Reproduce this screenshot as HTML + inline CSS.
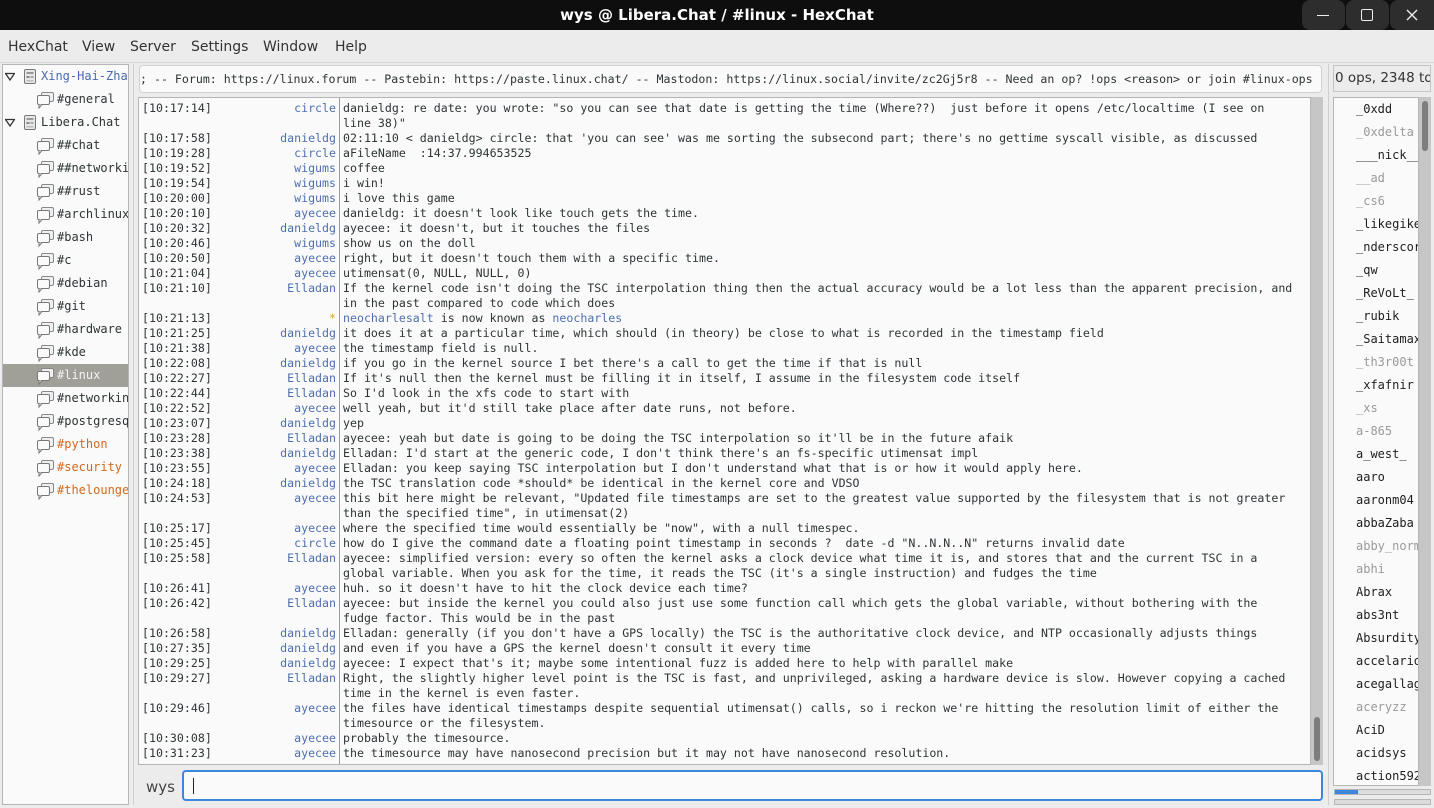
<!DOCTYPE html>
<html><head><meta charset="utf-8"><style>
*{margin:0;padding:0;box-sizing:border-box}
body{width:1434px;height:808px;background:#ececec;position:relative;overflow:hidden;font-family:"DejaVu Sans Mono","Liberation Mono",monospace;font-size:11.6px;color:#2e3436}
.abs{position:absolute}
#title{left:0;top:0;width:1434px;height:30px;background:#0e0e0e;color:#fff;font:bold 15px "DejaVu Sans","Liberation Sans",sans-serif;text-align:center;line-height:30px}
.wb{top:0;width:43px;height:30px;background:#2d2d2d;border-radius:8px}
#menu{left:0;top:31px;height:32px;font:14px "DejaVu Sans","Liberation Sans",sans-serif;color:#333;line-height:32px;white-space:nowrap}
#menu span{position:absolute}
#tree{left:2px;top:64px;width:127px;height:741px;background:#fafafa;border:1px solid #b6b6b6;overflow:hidden;font-size:12px}
.ti{position:absolute;height:23px;line-height:23px;white-space:nowrap;left:0;width:125px}
.ti svg{position:absolute;top:4px}
#topic{left:139px;top:65px;width:1183px;height:28px;background:#fafafa;border:1px solid #d0d0d0;border-radius:4px;white-space:nowrap;overflow:hidden;line-height:26px;padding-left:0}
#chat{left:138px;top:97px;width:1173px;height:668px;background:#fafafa;border:1px solid #b6b6b6;overflow:hidden}
#sep{left:200px;top:0;width:1px;height:668px;background:#9a9a9a}
.r{position:absolute;left:0;height:15px;line-height:15px;white-space:pre;width:1170px}
.r .t{position:absolute;left:3px}
.r .n{position:absolute;right:973px;color:#4f6fb0;text-align:right}
.r .m{position:absolute;left:204px}
#sb{left:1311px;top:97px;width:12px;height:668px;background:#c6c6c6}
#ul{left:1333px;top:97px;width:86px;height:689px;background:#fafafa;border:1px solid #b6b6b6;overflow:hidden;font-size:12px}
.u{position:absolute;left:22px;height:23px;line-height:23px;white-space:nowrap;color:#1e1e1e}
.g{color:#9a9a9a}
</style></head><body>
<div id="title" class="abs">wys @ Libera.Chat / #linux - HexChat</div>
<div class="abs wb" style="left:1302px"><div class="abs" style="left:15px;top:15px;width:12px;height:1px;background:#eee"></div></div>
<div class="abs wb" style="left:1346px"><div class="abs" style="left:15px;top:9px;width:12px;height:12px;border:1.3px solid #eee;border-radius:2px"></div></div>
<div class="abs wb" style="left:1390px;width:44px;border-radius:8px 0 0 8px"><svg class="abs" style="left:16px;top:9px" width="12" height="12"><path d="M1 1L11 11M11 1L1 11" stroke="#eee" stroke-width="1.4"/></svg></div>
<div id="menu" class="abs"><span style="left:8px">HexChat</span><span style="left:82px">View</span><span style="left:130px">Server</span><span style="left:191px">Settings</span><span style="left:263px">Window</span><span style="left:335px">Help</span></div>
<div class="abs" style="left:0;top:62px;width:1434px;height:1px;background:#d6d6d6"></div>

<div id="tree" class="abs">
<svg width="0" height="0" style="position:absolute"><defs>
<g id="srv"><rect x="1.5" y="0.5" width="11" height="14" rx="1.5" fill="#e8e8e8" stroke="#777"/><rect x="3.5" y="3" width="7" height="2" fill="#999"/><rect x="3.5" y="7" width="3" height="2" fill="#888"/><rect x="7.5" y="7" width="3" height="2" fill="#aaa"/><rect x="3.5" y="11" width="7" height="1.5" fill="#bbb"/></g>
<g id="ch"><rect x="4.5" y="0.5" width="12" height="9" rx="1.5" fill="#f0f0f0" stroke="#888"/><rect x="0.5" y="3.5" width="12" height="9" rx="1.5" fill="#fafafa" stroke="#777"/><path d="M2 12.5L2 16L5 12.5" fill="#fafafa" stroke="#777"/></g>
</defs></svg>
<div class="ti" style="top:0"><svg width="10" height="10" style="left:2px;top:7px"><path d="M0.5 1.5H9.5L5 8Z" fill="none" stroke="#333" stroke-width="1.3"/></svg><svg width="15" height="16" style="left:20px"><use href="#srv"/></svg><span style="position:absolute;left:38px;color:#4a68b0">Xing-Hai-Zhang</span></div>
<div class="ti" style="top:23px"><svg width="18" height="17" style="left:34px"><use href="#ch"/></svg><span style="position:absolute;left:54px">#general</span></div>
<div class="ti" style="top:46px"><svg width="10" height="10" style="left:2px;top:7px"><path d="M0.5 1.5H9.5L5 8Z" fill="none" stroke="#333" stroke-width="1.3"/></svg><svg width="15" height="16" style="left:20px"><use href="#srv"/></svg><span style="position:absolute;left:38px">Libera.Chat</span></div>
<div class="ti" style="top:69px"><svg width="18" height="17" style="left:34px"><use href="#ch"/></svg><span style="position:absolute;left:54px">##chat</span></div>
<div class="ti" style="top:92px"><svg width="18" height="17" style="left:34px"><use href="#ch"/></svg><span style="position:absolute;left:54px">##networking</span></div>
<div class="ti" style="top:115px"><svg width="18" height="17" style="left:34px"><use href="#ch"/></svg><span style="position:absolute;left:54px">##rust</span></div>
<div class="ti" style="top:138px"><svg width="18" height="17" style="left:34px"><use href="#ch"/></svg><span style="position:absolute;left:54px">#archlinux</span></div>
<div class="ti" style="top:161px"><svg width="18" height="17" style="left:34px"><use href="#ch"/></svg><span style="position:absolute;left:54px">#bash</span></div>
<div class="ti" style="top:184px"><svg width="18" height="17" style="left:34px"><use href="#ch"/></svg><span style="position:absolute;left:54px">#c</span></div>
<div class="ti" style="top:207px"><svg width="18" height="17" style="left:34px"><use href="#ch"/></svg><span style="position:absolute;left:54px">#debian</span></div>
<div class="ti" style="top:230px"><svg width="18" height="17" style="left:34px"><use href="#ch"/></svg><span style="position:absolute;left:54px">#git</span></div>
<div class="ti" style="top:253px"><svg width="18" height="17" style="left:34px"><use href="#ch"/></svg><span style="position:absolute;left:54px">#hardware</span></div>
<div class="ti" style="top:276px"><svg width="18" height="17" style="left:34px"><use href="#ch"/></svg><span style="position:absolute;left:54px">#kde</span></div>
<div class="ti" style="top:299px;background:#a09f98"><svg width="18" height="17" style="left:34px"><use href="#ch"/></svg><span style="position:absolute;left:54px;color:#f4f4f4">#linux</span></div>
<div class="ti" style="top:322px"><svg width="18" height="17" style="left:34px"><use href="#ch"/></svg><span style="position:absolute;left:54px">#networking</span></div>
<div class="ti" style="top:345px"><svg width="18" height="17" style="left:34px"><use href="#ch"/></svg><span style="position:absolute;left:54px">#postgresql</span></div>
<div class="ti" style="top:368px"><svg width="18" height="17" style="left:34px"><use href="#ch"/></svg><span style="position:absolute;left:54px;color:#d2691e">#python</span></div>
<div class="ti" style="top:391px"><svg width="18" height="17" style="left:34px"><use href="#ch"/></svg><span style="position:absolute;left:54px;color:#d2691e">#security</span></div>
<div class="ti" style="top:414px"><svg width="18" height="17" style="left:34px"><use href="#ch"/></svg><span style="position:absolute;left:54px;color:#d2691e">#thelounge</span></div>
</div>
<div class="abs" style="left:133px;top:64px;width:1px;height:741px;background:#cfcfcf"></div>
<div class="abs" style="left:1328px;top:64px;width:1px;height:741px;background:#cfcfcf"></div>

<div id="topic" class="abs"><span style="position:absolute;left:0px">; -- Forum: https://linux.forum -- Pastebin: https://paste.linux.chat/ -- Mastodon: https://linux.social/invite/zc2Gj5r8 -- Need an op? !ops &lt;reason&gt; or join #linux-ops</span></div>

<div id="chat" class="abs">
<div id="sep" class="abs"></div>
<div class="r" style="top:3px"><span class="t">[10:17:14]</span><span class="n">circle</span><span class="m">danieldg: re date: you wrote: "so you can see that date is getting the time (Where??)  just before it opens /etc/localtime (I see on</span></div>
<div class="r" style="top:18px"><span class="m">line 38)"</span></div>
<div class="r" style="top:33px"><span class="t">[10:17:58]</span><span class="n">danieldg</span><span class="m">02:11:10 &lt; danieldg&gt; circle: that 'you can see' was me sorting the subsecond part; there's no gettime syscall visible, as discussed</span></div>
<div class="r" style="top:48px"><span class="t">[10:19:28]</span><span class="n">circle</span><span class="m">aFileName  :14:37.994653525</span></div>
<div class="r" style="top:63px"><span class="t">[10:19:52]</span><span class="n">wigums</span><span class="m">coffee</span></div>
<div class="r" style="top:78px"><span class="t">[10:19:54]</span><span class="n">wigums</span><span class="m">i win!</span></div>
<div class="r" style="top:93px"><span class="t">[10:20:00]</span><span class="n">wigums</span><span class="m">i love this game</span></div>
<div class="r" style="top:108px"><span class="t">[10:20:10]</span><span class="n">ayecee</span><span class="m">danieldg: it doesn't look like touch gets the time.</span></div>
<div class="r" style="top:123px"><span class="t">[10:20:32]</span><span class="n">danieldg</span><span class="m">ayecee: it doesn't, but it touches the files</span></div>
<div class="r" style="top:138px"><span class="t">[10:20:46]</span><span class="n">wigums</span><span class="m">show us on the doll</span></div>
<div class="r" style="top:153px"><span class="t">[10:20:50]</span><span class="n">ayecee</span><span class="m">right, but it doesn't touch them with a specific time.</span></div>
<div class="r" style="top:168px"><span class="t">[10:21:04]</span><span class="n">ayecee</span><span class="m">utimensat(0, NULL, NULL, 0)</span></div>
<div class="r" style="top:183px"><span class="t">[10:21:10]</span><span class="n">Elladan</span><span class="m">If the kernel code isn't doing the TSC interpolation thing then the actual accuracy would be a lot less than the apparent precision, and</span></div>
<div class="r" style="top:198px"><span class="m">in the past compared to code which does</span></div>
<div class="r" style="top:213px"><span class="t">[10:21:13]</span><span class="n" style="color:#e0a040">*</span><span class="m"><span style="color:#4f6fb0">neocharlesalt</span> is now known as <span style="color:#4f6fb0">neocharles</span></span></div>
<div class="r" style="top:228px"><span class="t">[10:21:25]</span><span class="n">danieldg</span><span class="m">it does it at a particular time, which should (in theory) be close to what is recorded in the timestamp field</span></div>
<div class="r" style="top:243px"><span class="t">[10:21:38]</span><span class="n">ayecee</span><span class="m">the timestamp field is null.</span></div>
<div class="r" style="top:258px"><span class="t">[10:22:08]</span><span class="n">danieldg</span><span class="m">if you go in the kernel source I bet there's a call to get the time if that is null</span></div>
<div class="r" style="top:273px"><span class="t">[10:22:27]</span><span class="n">Elladan</span><span class="m">If it's null then the kernel must be filling it in itself, I assume in the filesystem code itself</span></div>
<div class="r" style="top:288px"><span class="t">[10:22:44]</span><span class="n">Elladan</span><span class="m">So I'd look in the xfs code to start with</span></div>
<div class="r" style="top:303px"><span class="t">[10:22:52]</span><span class="n">ayecee</span><span class="m">well yeah, but it'd still take place after date runs, not before.</span></div>
<div class="r" style="top:318px"><span class="t">[10:23:07]</span><span class="n">danieldg</span><span class="m">yep</span></div>
<div class="r" style="top:333px"><span class="t">[10:23:28]</span><span class="n">Elladan</span><span class="m">ayecee: yeah but date is going to be doing the TSC interpolation so it'll be in the future afaik</span></div>
<div class="r" style="top:348px"><span class="t">[10:23:38]</span><span class="n">danieldg</span><span class="m">Elladan: I'd start at the generic code, I don't think there's an fs-specific utimensat impl</span></div>
<div class="r" style="top:363px"><span class="t">[10:23:55]</span><span class="n">ayecee</span><span class="m">Elladan: you keep saying TSC interpolation but I don't understand what that is or how it would apply here.</span></div>
<div class="r" style="top:378px"><span class="t">[10:24:18]</span><span class="n">danieldg</span><span class="m">the TSC translation code *should* be identical in the kernel core and VDSO</span></div>
<div class="r" style="top:393px"><span class="t">[10:24:53]</span><span class="n">ayecee</span><span class="m">this bit here might be relevant, "Updated file timestamps are set to the greatest value supported by the filesystem that is not greater</span></div>
<div class="r" style="top:408px"><span class="m">than the specified time", in utimensat(2)</span></div>
<div class="r" style="top:423px"><span class="t">[10:25:17]</span><span class="n">ayecee</span><span class="m">where the specified time would essentially be "now", with a null timespec.</span></div>
<div class="r" style="top:438px"><span class="t">[10:25:45]</span><span class="n">circle</span><span class="m">how do I give the command date a floating point timestamp in seconds ?  date -d "N..N.N..N" returns invalid date</span></div>
<div class="r" style="top:453px"><span class="t">[10:25:58]</span><span class="n">Elladan</span><span class="m">ayecee: simplified version: every so often the kernel asks a clock device what time it is, and stores that and the current TSC in a</span></div>
<div class="r" style="top:468px"><span class="m">global variable. When you ask for the time, it reads the TSC (it's a single instruction) and fudges the time</span></div>
<div class="r" style="top:483px"><span class="t">[10:26:41]</span><span class="n">ayecee</span><span class="m">huh. so it doesn't have to hit the clock device each time?</span></div>
<div class="r" style="top:498px"><span class="t">[10:26:42]</span><span class="n">Elladan</span><span class="m">ayecee: but inside the kernel you could also just use some function call which gets the global variable, without bothering with the</span></div>
<div class="r" style="top:513px"><span class="m">fudge factor. This would be in the past</span></div>
<div class="r" style="top:528px"><span class="t">[10:26:58]</span><span class="n">danieldg</span><span class="m">Elladan: generally (if you don't have a GPS locally) the TSC is the authoritative clock device, and NTP occasionally adjusts things</span></div>
<div class="r" style="top:543px"><span class="t">[10:27:35]</span><span class="n">danieldg</span><span class="m">and even if you have a GPS the kernel doesn't consult it every time</span></div>
<div class="r" style="top:558px"><span class="t">[10:29:25]</span><span class="n">danieldg</span><span class="m">ayecee: I expect that's it; maybe some intentional fuzz is added here to help with parallel make</span></div>
<div class="r" style="top:573px"><span class="t">[10:29:27]</span><span class="n">Elladan</span><span class="m">Right, the slightly higher level point is the TSC is fast, and unprivileged, asking a hardware device is slow. However copying a cached</span></div>
<div class="r" style="top:588px"><span class="m">time in the kernel is even faster.</span></div>
<div class="r" style="top:603px"><span class="t">[10:29:46]</span><span class="n">ayecee</span><span class="m">the files have identical timestamps despite sequential utimensat() calls, so i reckon we're hitting the resolution limit of either the</span></div>
<div class="r" style="top:618px"><span class="m">timesource or the filesystem.</span></div>
<div class="r" style="top:633px"><span class="t">[10:30:08]</span><span class="n">ayecee</span><span class="m">probably the timesource.</span></div>
<div class="r" style="top:648px"><span class="t">[10:31:23]</span><span class="n">ayecee</span><span class="m">the timesource may have nanosecond precision but it may not have nanosecond resolution.</span></div>
</div>
<div id="sb" class="abs"><div class="abs" style="left:3px;top:620px;width:6px;height:44px;background:#7d7d7d;border-radius:3px"></div></div>

<div class="abs" style="left:146px;top:778px;font:15px 'DejaVu Sans','Liberation Sans',sans-serif;color:#444">wys</div>
<div class="abs" style="left:182px;top:770px;width:1141px;height:31px;border:2px solid #3d86dc;border-radius:4px;background:#fafafa"><div class="abs" style="left:9px;top:6px;width:1px;height:16px;background:#222"></div></div>

<div class="abs" style="left:1333px;top:65px;width:98px;height:27px;border:1px solid #c4c4c4;background:#ececec;font:13.5px 'DejaVu Sans','Liberation Sans',sans-serif;line-height:25px;white-space:nowrap;overflow:hidden;padding-left:1px;color:#333">0 ops, 2348 total</div>
<div id="ul" class="abs">
<div class="u" style="top:0">_0xdd</div>
<div class="u g" style="top:23px">_0xdelta</div>
<div class="u" style="top:46px">___nick__</div>
<div class="u g" style="top:69px">__ad</div>
<div class="u g" style="top:92px">_cs6</div>
<div class="u" style="top:115px">_likegike</div>
<div class="u" style="top:138px">_nderscor</div>
<div class="u" style="top:161px">_qw</div>
<div class="u" style="top:184px">_ReVoLt_</div>
<div class="u" style="top:207px">_rubik</div>
<div class="u" style="top:230px">_Saitamax</div>
<div class="u g" style="top:253px">_th3r00t</div>
<div class="u" style="top:276px">_xfafnir</div>
<div class="u g" style="top:299px">_xs</div>
<div class="u g" style="top:322px">a-865</div>
<div class="u" style="top:345px">a_west_</div>
<div class="u" style="top:368px">aaro</div>
<div class="u" style="top:391px">aaronm04</div>
<div class="u" style="top:414px">abbaZaba</div>
<div class="u g" style="top:437px">abby_norm</div>
<div class="u g" style="top:460px">abhi</div>
<div class="u" style="top:483px">Abrax</div>
<div class="u" style="top:506px">abs3nt</div>
<div class="u" style="top:529px">Absurdity</div>
<div class="u" style="top:552px">accelario</div>
<div class="u" style="top:575px">acegallag</div>
<div class="u g" style="top:598px">aceryzz</div>
<div class="u" style="top:621px">AciD</div>
<div class="u" style="top:644px">acidsys</div>
<div class="u" style="top:667px">action592</div>
</div>
<div class="abs" style="left:1419px;top:97px;width:12px;height:689px;background:#c6c6c6"><div class="abs" style="left:3px;top:4px;width:6px;height:50px;background:#7d7d7d;border-radius:3px"></div></div>
<div class="abs" style="left:1334px;top:789px;width:97px;height:6px;border:1px solid #b6b6b6;background:#dcdcdc"><div class="abs" style="left:0;top:0;width:23px;height:4px;background:#3d86dc"></div></div>
<div class="abs" style="left:1334px;top:799px;width:97px;height:6px;border:1px solid #b6b6b6;background:#dcdcdc"></div>
</body></html>
